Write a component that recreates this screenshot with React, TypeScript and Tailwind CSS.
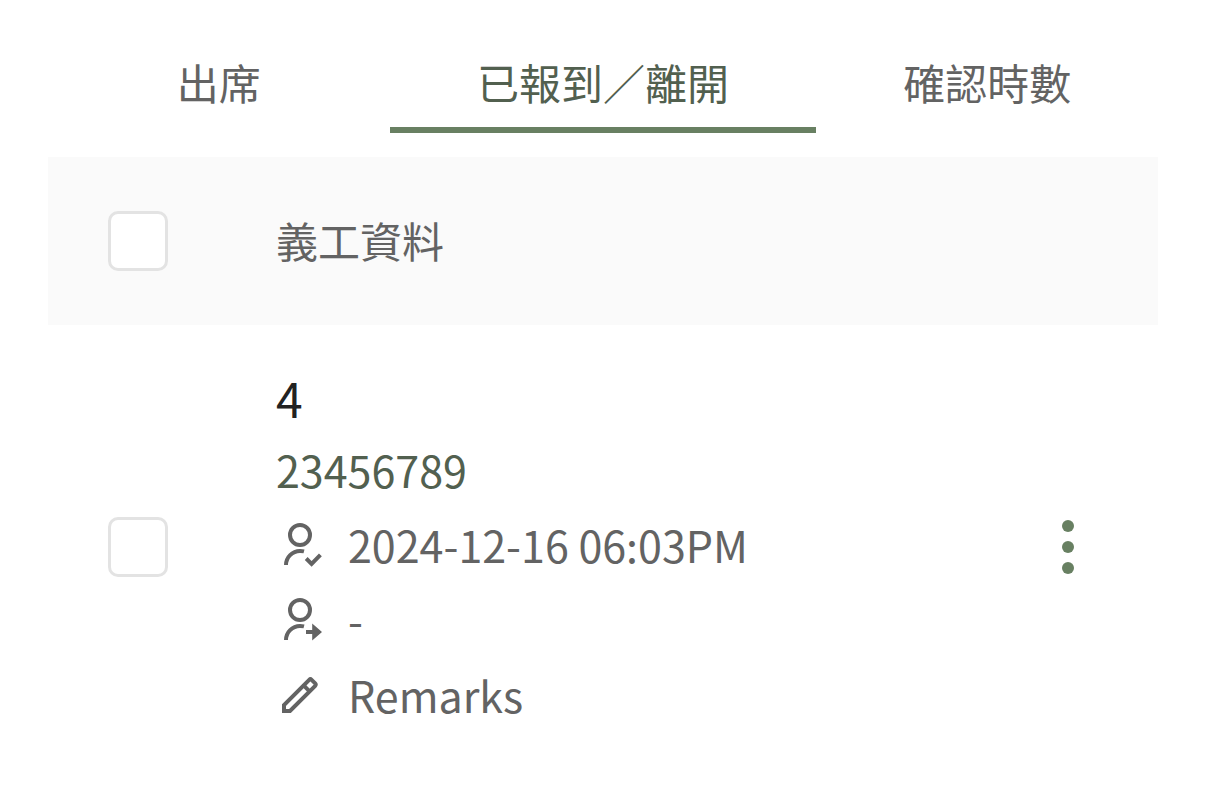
import React, { useState } from 'react';

type TabKey = 'attendance' | 'checked' | 'hours';

interface Volunteer {
  id: number;
  name: string;
  phone: string;
  checkIn: string;
  checkOut: string;
  remarks: string;
}

const tabs: { key: TabKey; label: string }[] = [
  { key: 'attendance', label: '出席' },
  { key: 'checked', label: '已報到／離開' },
  { key: 'hours', label: '確認時數' },
];

const volunteers: Volunteer[] = [
  { id: 1, name: '4', phone: '23456789', checkIn: '2024-12-16 06:03PM', checkOut: '-', remarks: 'Remarks' },
];

const checkboxClass =
  'block size-[60px] appearance-none rounded-[10px] border-[3px] border-[#e3e3e3] bg-white checked:border-[#688062] checked:bg-[#688062]';

function PersonShape() {
  return (
    <g fill="none" stroke="currentColor" strokeWidth="2">
      <circle cx="12" cy="7" r="5" />
      <path d="M5 22a7 7 0 0 1 7-7q1.2 0 2 .2" />
    </g>
  );
}

function CheckInIcon() {
  return (
    <svg viewBox="0 0 24 24" className="size-12 shrink-0" aria-hidden="true">
      <PersonShape />
      <path d="M15.1 18.75l2.7 2.7 4.4-4.5" fill="none" stroke="currentColor" strokeWidth="2" />
    </svg>
  );
}

function CheckOutIcon() {
  return (
    <svg viewBox="0 0 24 24" className="size-12 shrink-0" aria-hidden="true">
      <PersonShape />
      <path d="M15 17h3.1v-3.3L23 18l-4.9 4.3V19H15z" fill="currentColor" />
    </svg>
  );
}

function PencilIcon() {
  return (
    <svg viewBox="0 0 24 24" className="size-12 shrink-0" aria-hidden="true">
      <g fill="none" stroke="currentColor" strokeWidth="2">
        <path d="M4 20v-3L16.6 4.4q.6-.6 1.2 0l1.8 1.8q.6.6 0 1.2L7 20z" />
        <path d="M13.8 7.2l3 3" />
      </g>
    </svg>
  );
}

export default function App() {
  const [active, setActive] = useState<TabKey>('checked');
  const [selected, setSelected] = useState<number[]>([]);

  const allSelected = selected.length === volunteers.length;

  const toggle = (id: number) => {
    setSelected(prev => (prev.includes(id) ? prev.filter(v => v !== id) : [...prev, id]));
  };

  return (
    <div
      lang="zh-Hant"
      className="min-h-screen bg-white px-12 pt-8 font-['Noto_Sans_CJK_TC',sans-serif] text-[42px] text-[#636363] antialiased"
    >
      <div role="tablist" className="mb-6 grid grid-cols-[1fr_1.25fr_1fr]">
        {tabs.map(tab => (
          <button
            key={tab.key}
            type="button"
            role="tab"
            aria-selected={active === tab.key}
            onClick={() => setActive(tab.key)}
            className={`border-b-[6px] pt-3 pb-2 leading-[75px] ${
              active === tab.key ? 'border-[#688062] text-[#52604f]' : 'border-transparent'
            }`}
          >
            {tab.label}
          </button>
        ))}
      </div>

      <table className="w-full table-fixed border-collapse text-left">
        <thead className="bg-[#fafafa]">
          <tr className="h-[168px]">
            <th className="w-[180px] pl-[60px]">
              <input
                type="checkbox"
                aria-label="全選"
                checked={allSelected}
                onChange={() => setSelected(allSelected ? [] : volunteers.map(v => v.id))}
                className={checkboxClass}
              />
            </th>
            <th className="pb-1 pl-12 font-normal">義工資料</th>
            <th className="w-[180px]" />
          </tr>
        </thead>
        <tbody>
          {volunteers.map(v => (
            <tr key={v.id}>
              <td className="pl-[60px]">
                <input
                  type="checkbox"
                  aria-label={v.name}
                  checked={selected.includes(v.id)}
                  onChange={() => toggle(v.id)}
                  className={checkboxClass}
                />
              </td>
              <td className="py-[37px] pl-12 text-[43px] leading-[75px]">
                <div className="text-5xl leading-[70px] text-[#222222]">{v.name}</div>
                <div className="text-[#52604f]">{v.phone}</div>
                <div className="flex items-center gap-6">
                  <CheckInIcon />
                  <span>{v.checkIn}</span>
                </div>
                <div className="flex items-center gap-6">
                  <CheckOutIcon />
                  <span>{v.checkOut}</span>
                </div>
                <div className="flex items-center gap-6">
                  <PencilIcon />
                  <span>{v.remarks}</span>
                </div>
              </td>
              <td>
                <button type="button" aria-label="更多" className="mx-auto block text-[#688062]">
                  <svg viewBox="0 0 24 24" className="size-[72px]" fill="currentColor" aria-hidden="true">
                    <circle cx="12" cy="5" r="2" />
                    <circle cx="12" cy="12" r="2" />
                    <circle cx="12" cy="19" r="2" />
                  </svg>
                </button>
              </td>
            </tr>
          ))}
        </tbody>
      </table>
    </div>
  );
}
